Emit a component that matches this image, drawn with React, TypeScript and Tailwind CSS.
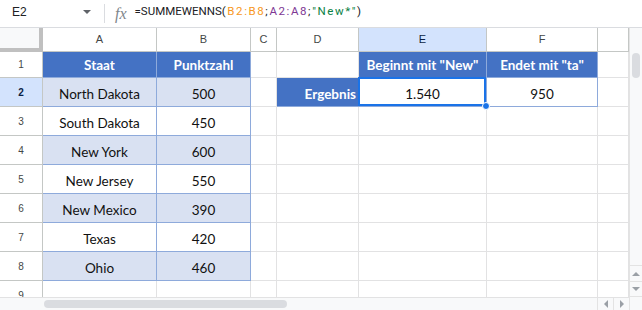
import React from "react";

type Cell = { t?: string; k: "hdr" | "band" | "plain" | "empty"; right?: boolean; sel?: boolean };

const kinds = {
  hdr: "bg-[#4472c4] text-white font-bold border-[#8eaadb]",
  band: "bg-[#d9e1f2] text-[#111] border-[#8eaadb]",
  plain: "bg-white text-[#111] border-[#8eaadb]",
  empty: "bg-white border-[#e2e2e3]",
};

const E: Cell = { k: "empty" };

const rows: Cell[][] = [
  [{ t: "Staat", k: "hdr" }, { t: "Punktzahl", k: "hdr" }, E, E, { t: 'Beginnt mit "New"', k: "hdr" }, { t: 'Endet mit "ta"', k: "hdr" }, E],
  [{ t: "North Dakota", k: "band" }, { t: "500", k: "band" }, E, { t: "Ergebnis", k: "hdr", right: true }, { t: "1.540", k: "plain", sel: true }, { t: "950", k: "plain" }, E],
  [{ t: "South Dakota", k: "plain" }, { t: "450", k: "plain" }, E, E, E, E, E],
  [{ t: "New York", k: "band" }, { t: "600", k: "band" }, E, E, E, E, E],
  [{ t: "New Jersey", k: "plain" }, { t: "550", k: "plain" }, E, E, E, E, E],
  [{ t: "New Mexico", k: "band" }, { t: "390", k: "band" }, E, E, E, E, E],
  [{ t: "Texas", k: "plain" }, { t: "420", k: "plain" }, E, E, E, E, E],
  [{ t: "Ohio", k: "band" }, { t: "460", k: "band" }, E, E, E, E, E],
  [E, E, E, E, E, E, E],
];

const letters = ["A", "B", "C", "D", "E", "F", ""];

function FormulaBar() {
  return (
    <div className="flex h-[28px] items-center border-b border-[#dadce0] pb-[3px] font-['Roboto',sans-serif] text-[#202124]">
      <div className="flex w-[104px] items-center">
        <span className="pl-[12px] font-['Liberation_Sans',sans-serif] text-[12px]">E2</span>
        <span className="ml-auto mr-[13px] h-0 w-0 border-x-[4px] border-t-[4px] border-x-transparent border-t-[#5f6368]" />
      </div>
      <div className="mt-[3px] h-[19px] w-px bg-[#dadce0]" />
      <span className="ml-[10px] mt-[4px] font-['Liberation_Serif',serif] text-[16px] italic leading-none text-[#80868b]">fx</span>
      <div className="ml-[8px] whitespace-nowrap text-[11.5px]">
        =SUMMEWENNS
        <span className="tracking-[1.6px]">
          (<span className="text-[#f7981d]">B2:B8</span>;<span className="text-[#7e3794]">A2:A8</span>;
          <span className="text-[#0b8043]">"New*"</span>)
        </span>
      </div>
    </div>
  );
}

function VScroll() {
  return (
    <div className="flex w-[13px] flex-col border-l border-[#e3e3e3] bg-[#f8f9fa]">
      <div className="mx-auto mt-[25px] h-[25px] w-[8px] rounded-full bg-[#dadce0]" />
      <div className="flex-1" />
      <div className="flex h-[16px] items-center justify-center border-t border-[#e3e3e3]">
        <span className="h-0 w-0 border-x-[4px] border-b-[4px] border-x-transparent border-b-[#9aa0a6]" />
      </div>
      <div className="flex h-[16px] items-center justify-center border-y border-[#e3e3e3]">
        <span className="h-0 w-0 border-x-[4px] border-t-[4px] border-x-transparent border-t-[#9aa0a6]" />
      </div>
      <div className="h-[13px]" />
    </div>
  );
}

function HScroll() {
  return (
    <div className="flex h-[13px] border-t border-[#e2e2e3] bg-[#f8f9fa]">
      <div className="w-[44px]" />
      <div className="mt-[2px] h-[8px] w-[243px] rounded-full bg-[#dadce0]" />
      <div className="flex-1" />
      <div className="flex w-[16px] items-center justify-center border-l border-[#e3e3e3]">
        <span className="h-0 w-0 border-y-[4px] border-r-[4px] border-y-transparent border-r-[#9aa0a6]" />
      </div>
      <div className="flex w-[16px] items-center justify-center border-l border-[#e3e3e3]">
        <span className="h-0 w-0 border-y-[4px] border-l-[4px] border-y-transparent border-l-[#9aa0a6]" />
      </div>
    </div>
  );
}

export default function App() {
  return (
    <div className="flex h-[310px] w-[642px] flex-col overflow-hidden bg-white">
      <FormulaBar />
      <div className="flex min-h-0 flex-1">
        <div className="flex w-[629px] flex-col">
          <div className="h-[269px] overflow-hidden">
            <div className="grid grid-cols-[43px_114px_94px_26px_82px_128px_111px_31px] grid-rows-[24px_26px_repeat(8,29px)]">
              {/* column headers */}
              <div className="border-b-[4px] border-r-[4px] border-[#c0c0c0] bg-[#f8f9fa]" />
              {letters.map((l, i) => (
                <div
                  key={l + i}
                  className={`flex items-center justify-center border-b border-r font-['Liberation_Sans',sans-serif] text-[11px] ${
                    l === "E" ? "border-[#c4c7c5] bg-[#d3e3fd] text-[#0b1f44]" : "border-[#c4c7c5] bg-white text-[#444746]"
                  }`}
                >
                  {l}
                </div>
              ))}
              {rows.map((r, ri) => (
                <React.Fragment key={ri}>
                  <div
                    className={`flex items-center justify-center border-b border-r font-['Liberation_Sans',sans-serif] text-[10px] ${
                      ri === 1 ? "border-[#c4c7c5] bg-[#d3e3fd] font-bold text-[#0b1f44]" : "border-[#c4c7c5] bg-white text-[#444746]"
                    }`}
                  >
                    {ri + 1}
                  </div>
                  {r.map((c, ci) => (
                    <div
                      key={ci}
                      className={`relative flex items-end whitespace-nowrap border-b border-r pb-[3px] font-['Lato',sans-serif] text-[13.5px] leading-[18px] ${kinds[c.k]} ${
                        c.right ? "justify-end pr-[2px]" : "justify-center"
                      }`}
                    >
                      {c.t}
                      {c.sel && (
                        <>
                          <div className="pointer-events-none absolute -left-px -top-px bottom-0 right-0 border-2 border-[#1a73e8]" />
                          <div className="absolute -bottom-[4px] -right-[4px] z-10 h-[8px] w-[8px] rounded-full border border-white bg-[#1a73e8]" />
                        </>
                      )}
                    </div>
                  ))}
                </React.Fragment>
              ))}
            </div>
          </div>
          <HScroll />
        </div>
        <VScroll />
      </div>
    </div>
  );
}
